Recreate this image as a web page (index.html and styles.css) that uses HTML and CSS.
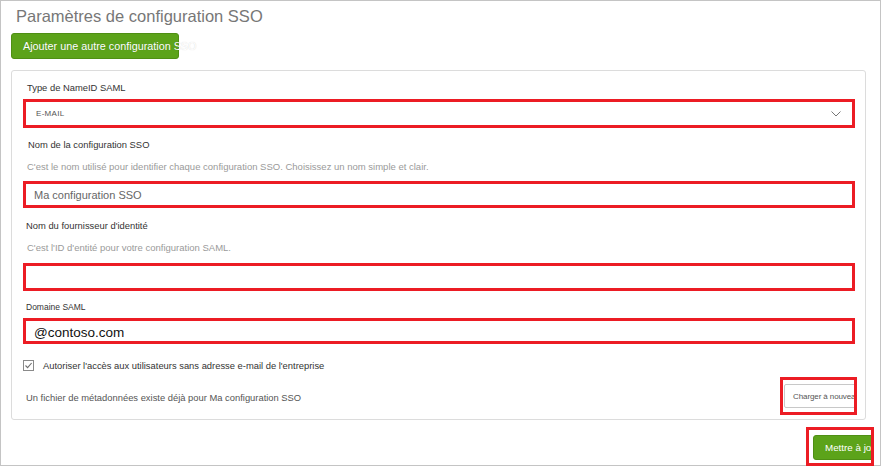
FILE: index.html
```html
<!DOCTYPE html>
<html lang="fr">
<head>
<meta charset="utf-8">
<title>Paramètres de configuration SSO</title>
<link rel="stylesheet" href="styles.css">
</head>
<body>
<div class="page">
  <h1 class="title">Paramètres de configuration SSO</h1>
  <button class="btn-green btn-add" type="button">Ajouter une autre configuration SSO</button>

  <section class="panel">
    <div class="label l1">Type de NameID SAML</div>
    <div class="box box-select">
      <span class="select-value">E-MAIL</span>
      <svg class="chevron" width="10" height="6" viewBox="0 0 10 6"><path d="M0.5 0.5 L5 5 L9.5 0.5" fill="none" stroke="#777" stroke-width="1"/></svg>
    </div>

    <div class="label l2">Nom de la configuration SSO</div>
    <div class="help">C'est le nom utilisé pour identifier chaque configuration SSO. Choisissez un nom simple et clair.</div>
    <div class="box box-name"><span class="input-text">Ma configuration SSO</span></div>

    <div class="label l3">Nom du fournisseur d'identité</div>
    <div class="help">C'est l'ID d'entité pour votre configuration SAML.</div>
    <div class="box box-idp"></div>

    <div class="label label-small">Domaine SAML</div>
    <div class="box box-domain"><span class="domain-text">@contoso.com</span></div>

    <div class="check-row">
      <svg class="checkbox" width="11" height="11" viewBox="0 0 11 11"><rect x="0.5" y="0.5" width="10" height="10" fill="#fff" stroke="#8a8a8a"/><path d="M2.5 5.5 L4.6 7.6 L8.6 3" fill="none" stroke="#6f6f6f" stroke-width="1.1"/></svg>
      <span class="check-text">Autoriser l'accès aux utilisateurs sans adresse e-mail de l'entreprise</span>
    </div>

    <div class="meta-row">
      <span class="meta-text">Un fichier de métadonnées existe déjà pour Ma configuration SSO</span>
      <div class="mark mark-reload"><button class="btn-outline" type="button">Charger à nouveau</button></div>
    </div>
  </section>

  <div class="footer">
    <div class="mark mark-update"><button class="btn-green btn-update" type="button">Mettre à jour</button></div>
  </div>
</div>
</body>
</html>
```

FILE: styles.css
```css
* { box-sizing: border-box; }

html, body {
  margin: 0;
  padding: 0;
  background: #fff;
}

body {
  font-family: "Liberation Sans", Arial, sans-serif;
  color: #333;
}

.page {
  width: 881px;
  height: 466px;
  border: 1px solid #c4c4c4;
  padding: 0 0 0 10px;
}

.title {
  margin: 5px 0 0 5px;
  font-size: 16.5px;
  line-height: 20px;
  font-weight: normal;
  color: #777;
  letter-spacing: 0;
}

.btn-green {
  background: #5ca31a;
  border: 1px solid #4f8f14;
  border-radius: 3px;
  color: #fff;
  font-family: inherit;
  white-space: nowrap;
  text-align: left;
  padding: 0;
  cursor: pointer;
}

.btn-add {
  display: block;
  margin-top: 7px;
  width: 168px;
  height: 26px;
  padding-left: 11px;
  font-size: 10.8px;
  overflow: visible;
  text-shadow: 0 0 1px rgba(0, 0, 0, 0.18);
}

.panel {
  margin-top: 11px;
  width: 855px;
  height: 350px;
  border: 1px solid #dcdcdc;
  border-radius: 3px;
  padding-top: 10px;
}

.label {
  padding-left: 15px;
  font-size: 9.4px;
  line-height: 14px;
  color: #333;
}

.l2 { margin-top: 10px; padding-left: 16px; }
.l3 { margin-top: 11px; padding-left: 14px; }

.label-small {
  margin-top: 9px;
  padding-left: 14px;
  font-size: 8.5px;
}

.help {
  margin-top: 8px;
  padding-left: 15px;
  font-size: 9.5px;
  line-height: 14px;
  color: #9a9a9a;
}

.box {
  margin: 0 10px 0 11px;
  border: 3px solid #ec1c24;
  display: flex;
  align-items: center;
}

.box-select {
  margin-top: 4px;
  height: 29px;
  padding: 0 10px 0 10px;
  justify-content: space-between;
}

.select-value {
  font-size: 8px;
  letter-spacing: 0.3px;
  color: #555;
}

.chevron { display: block; margin-right: 1px; }

.box-name {
  margin-top: 7px;
  height: 27px;
  padding-left: 8px;
  padding-top: 1px;
}

.input-text {
  font-size: 11px;
  color: #666;
}

.box-idp {
  margin-top: 8px;
  height: 28px;
}

.box-domain {
  margin-top: 4px;
  height: 26px;
  padding-left: 8px;
  padding-top: 3px;
}

.domain-text {
  font-size: 13.5px;
  color: #111;
}

.check-row {
  margin-top: 14px;
  height: 14px;
  padding-left: 11px;
  display: flex;
  align-items: center;
  gap: 9px;
}

.checkbox { display: block; }

.check-text {
  font-size: 9.4px;
  color: #333;
}

.meta-row {
  margin-top: 5px;
  padding-left: 14px;
  padding-right: 8px;
  display: flex;
  align-items: center;
  justify-content: space-between;
}

.meta-text {
  font-size: 9.4px;
  color: #555;
  padding-top: 2px;
}

.mark {
  border: 3px solid #ec1c24;
  overflow: hidden;
}

.mark-reload {
  width: 77px;
  height: 38px;
  padding: 4px 0 0 1px;
}

.btn-outline {
  display: block;
  width: 80px;
  height: 24px;
  background: #fff;
  border: 1px solid #c8c8c8;
  border-radius: 2px;
  padding: 0 0 0 8px;
  text-align: left;
  font-family: inherit;
  font-size: 8px;
  letter-spacing: -0.1px;
  color: #555;
  white-space: nowrap;
}

.footer {
  margin-top: 7px;
  padding-right: 6px;
  display: flex;
  justify-content: flex-end;
}

.mark-update {
  width: 68px;
  height: 39px;
  padding: 5px 0 0 4px;
}

.btn-update {
  display: block;
  width: 72px;
  height: 25px;
  padding-left: 11px;
  font-size: 9.8px;
}
```
